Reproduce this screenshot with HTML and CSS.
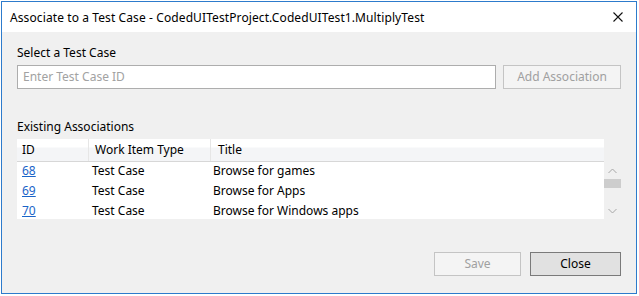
FILE: index.html
```html
<!DOCTYPE html>
<html lang="en">
<head>
    <meta charset="UTF-8">
    <title>Associate to a Test Case</title>
    <link rel="stylesheet" href="styles.css">
</head>
<body>
    <div class="window">
        <div class="titlebar">
            <span class="title">Associate to a Test Case - CodedUITestProject.CodedUITest1.MultiplyTest</span>
            <svg class="close-x" width="10" height="10" viewBox="0 0 10 10">
                <path d="M0.5 0.5 L9.5 9.5 M9.5 0.5 L0.5 9.5" stroke="#111" stroke-width="1.1"/>
            </svg>
        </div>
        <div class="content">
            <div class="label">Select a Test Case</div>
            <div class="search-row">
                <div class="input">Enter Test Case ID</div>
                <div class="btn btn-disabled btn-add">Add Association</div>
            </div>

            <div class="label label-assoc">Existing Associations</div>
            <div class="list">
                <div class="list-main">
                    <div class="list-head">
                        <div class="col col-id">ID</div>
                        <div class="col col-type">Work Item Type</div>
                        <div class="col col-title">Title</div>
                    </div>
                    <div class="list-body">
                        <div class="row">
                            <div class="cell col-id"><a href="#">68</a></div>
                            <div class="cell col-type">Test Case</div>
                            <div class="cell col-title">Browse for games</div>
                        </div>
                        <div class="row">
                            <div class="cell col-id"><a href="#">69</a></div>
                            <div class="cell col-type">Test Case</div>
                            <div class="cell col-title">Browse for Apps</div>
                        </div>
                        <div class="row">
                            <div class="cell col-id"><a href="#">70</a></div>
                            <div class="cell col-type">Test Case</div>
                            <div class="cell col-title">Browse for Windows apps</div>
                        </div>
                    </div>
                </div>
                <div class="scrollbar">
                    <div class="arrow">
                        <svg width="9" height="6" viewBox="0 0 9 6"><path d="M0.5 5 L4.5 1 L8.5 5" fill="none" stroke="#a6a6a6" stroke-width="1"/></svg>
                    </div>
                    <div class="track"><div class="thumb"></div></div>
                    <div class="arrow">
                        <svg width="9" height="6" viewBox="0 0 9 6"><path d="M0.5 1 L4.5 5 L8.5 1" fill="none" stroke="#a6a6a6" stroke-width="1"/></svg>
                    </div>
                </div>
            </div>

            <div class="footer">
                <div class="btn btn-disabled btn-save">Save</div>
                <div class="btn btn-close">Close</div>
            </div>
        </div>
    </div>
</body>
</html>
```

FILE: styles.css
```css
body {
    margin: 0;
    background: #fff;
    font-family: "Noto Sans", "Open Sans", sans-serif;
    font-size: 12px;
    color: #1a1a1a;
}

.window {
    width: 634px;
    height: 291px;
    margin: 1px 0 0 1px;
    border: 1px solid #2d7bcc;
    display: flex;
    flex-direction: column;
    background: #f0f0f0;
}

.titlebar {
    height: 30px;
    background: #fff;
    display: flex;
    align-items: center;
    justify-content: space-between;
    padding: 0 13px 0 8px;
    flex-shrink: 0;
}

.title {
    font-size: 12px;
    letter-spacing: 0.1px;
    color: #000;
}

.content {
    flex: 1;
    padding: 13px 15px 0 15px;
    display: flex;
    flex-direction: column;
}

.label {
    line-height: 16px;
    color: #000;
}

.search-row {
    display: flex;
    gap: 7px;
    margin-top: 4px;
}

.input {
    width: 472px;
    height: 22px;
    line-height: 22px;
    padding-left: 5px;
    border: 1px solid #adadad;
    background: #fff;
    color: #a2a2a2;
}

.btn {
    height: 22px;
    line-height: 22px;
    text-align: center;
    box-sizing: content-box;
}

.btn-disabled {
    border: 1px solid #c4c4c4;
    background: #f4f4f4;
    color: #a0a0a0;
}

.btn-add {
    width: 116px;
}

.label-assoc {
    margin-top: 30px;
}

/* list with header + scrollbar */
.list {
    display: flex;
    margin-top: 4px;
}

.list-main {
    width: 587px;
}

.list-head {
    display: flex;
    height: 22px;
    background: linear-gradient(to bottom, #fff 0, #fff 8px, #f4f5f7 9px, #f4f5f7 100%);
    border-bottom: 1px solid #d7d7d7;
}

.col {
    line-height: 22px;
    color: #000;
    border-right: 1px solid #e6e6e6;
    box-sizing: border-box;
}

.list-head .col-id { width: 72px; padding-left: 5px; }
.list-head .col-type { width: 122px; padding-left: 6px; }
.list-head .col-title { flex: 1; padding-left: 7px; border-right: none; }

.list-body {
    height: 57px;
    overflow: hidden;
    background: #fff;
}

.row {
    display: flex;
    height: 20px;
}

.cell {
    line-height: 18px;
    color: #000;
    box-sizing: border-box;
}

.row .col-id { width: 72px; padding-left: 5px; }
.row .col-type { width: 122px; padding-left: 3px; }
.row .col-title { flex: 1; padding-left: 2px; }

.cell a {
    color: #1a64c8;
    text-decoration: underline;
}

.scrollbar {
    width: 17px;
    margin-top: 23px;
    height: 57px;
    display: flex;
    flex-direction: column;
}

.arrow {
    height: 17px;
    display: flex;
    align-items: center;
    justify-content: center;
}

.track {
    flex: 1;
}

.thumb {
    height: 9px;
    background: #cdcdcd;
}

.footer {
    display: flex;
    justify-content: flex-end;
    gap: 9px;
    margin-top: 33px;
}

.btn-save {
    width: 85px;
}

.btn-close {
    width: 89px;
    border: 1px solid #7a7a7a;
    background: #e1e1e1;
    color: #000;
}
```
